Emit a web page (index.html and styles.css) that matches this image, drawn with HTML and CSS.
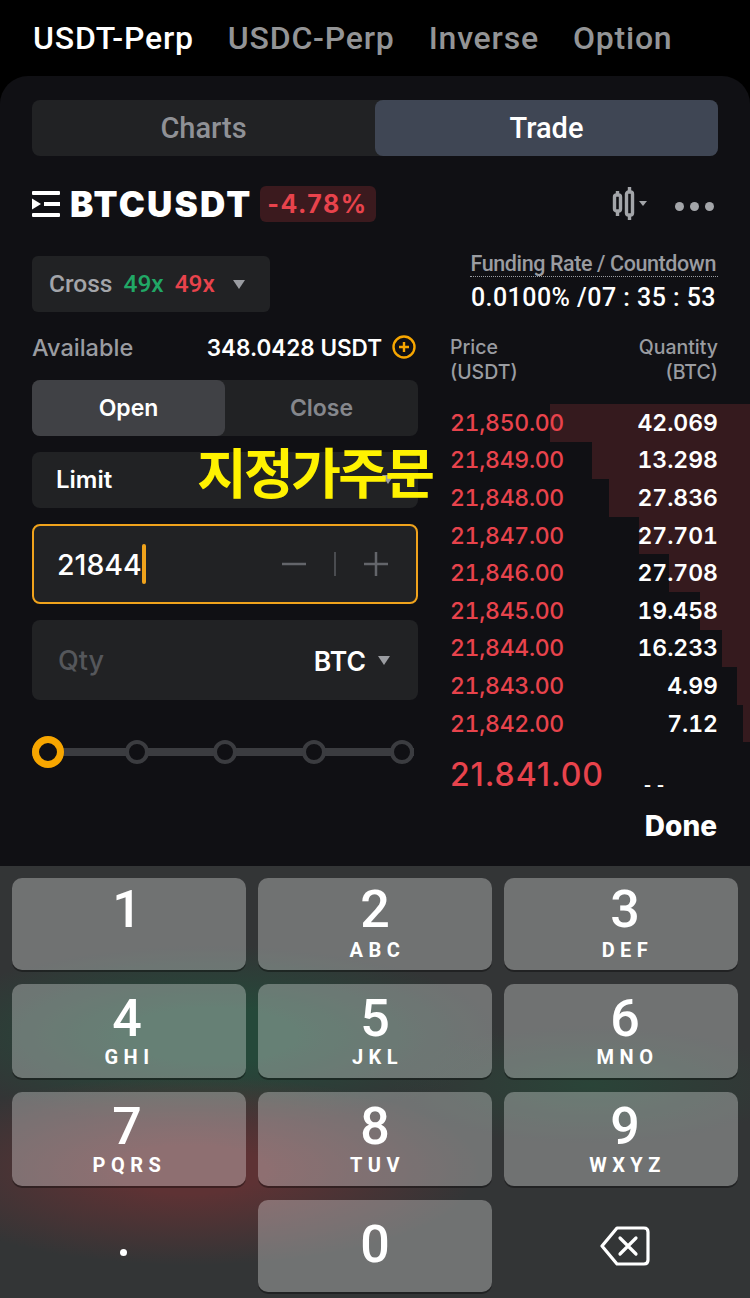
FILE: index.html
```html
<!DOCTYPE html>
<html lang="en">
<head>
    <meta charset="UTF-8">
    <meta name="viewport" content="width=device-width, initial-scale=1.0">
    <title>BTCUSDT Trade</title>
    <link rel="stylesheet" href="styles.css">
</head>
<body>

<nav class="market-tabs">
    <span class="market-tab active">USDT-Perp</span>
    <span class="market-tab">USDC-Perp</span>
    <span class="market-tab">Inverse</span>
    <span class="market-tab">Option</span>
</nav>

<main class="panel">
    <div class="view-switch">
        <span class="view-btn">Charts</span>
        <span class="view-btn active">Trade</span>
    </div>

    <div class="symbol-row">
        <svg class="menu-icon" width="28" height="28" viewBox="0 0 28 28">
            <rect x="0" y="1" width="28" height="4" rx="1" fill="#fff"/>
            <rect x="12" y="12" width="16" height="4" fill="#fff"/>
            <rect x="0" y="23" width="28" height="4" rx="1" fill="#fff"/>
            <path d="M0 8.5L9 14L0 19.5Z" fill="#fff"/>
        </svg>
        <span class="symbol">BTCUSDT</span>
        <span class="change">-4.78%</span>
        <div class="symbol-tools">
            <svg width="36" height="34" viewBox="0 0 36 34" fill="none" stroke="#a3a5a9" stroke-width="3.4">
                <rect x="2.5" y="8" width="6" height="16" rx="2"/>
                <rect x="14.5" y="5" width="6" height="23" rx="2"/>
                <path d="M5.5 4V8M5.5 24V29M17.5 0V5M17.5 28V33"/>
                <path d="M27 14H35L31 19Z" fill="#a3a5a9" stroke="none"/>
            </svg>
            <span class="more"><i></i><i></i><i></i></span>
        </div>
    </div>

    <div class="info-row">
        <div class="margin-btn">
            <span>Cross</span>
            <span class="green">49x</span>
            <span class="red">49x</span>
            <b class="caret"></b>
        </div>
        <div class="funding">
            <div class="funding-label">Funding Rate / Countdown</div>
            <div class="funding-value">0.0100% /07 : 35 : 53</div>
        </div>
    </div>

    <div class="trade-grid">
        <section class="order-form">
            <div class="available">
                <span class="muted">Available</span>
                <span class="balance">348.0428 USDT
                    <svg width="24" height="24" viewBox="0 0 24 24" fill="none" stroke="#f7a600" stroke-width="2.4">
                        <circle cx="12" cy="12" r="10.5"/>
                        <path d="M7 12H17M12 7V17"/>
                    </svg>
                </span>
            </div>

            <div class="open-close">
                <span class="oc-btn active">Open</span>
                <span class="oc-btn">Close</span>
            </div>

            <div class="field field-type">
                <span>Limit</span>
                <b class="caret"></b>
            </div>

            <div class="field field-price">
                <span class="price-text">21844<i class="cursor"></i></span>
                <span class="stepper">
                    <svg width="26" height="26" viewBox="0 0 26 26" stroke="#63656a" stroke-width="2.5"><path d="M1 13H25"/></svg>
                    <i class="step-line"></i>
                    <svg width="26" height="26" viewBox="0 0 26 26" stroke="#63656a" stroke-width="2.5"><path d="M1 13H25M13 1V25"/></svg>
                </span>
            </div>

            <div class="field field-qty">
                <span class="placeholder">Qty</span>
                <span class="unit">BTC <b class="caret"></b></span>
            </div>

            <div class="slider">
                <i class="dot first"></i>
                <i class="dot"></i>
                <i class="dot"></i>
                <i class="dot"></i>
                <i class="dot"></i>
            </div>
        </section>

        <section class="book">
            <div class="book-head">
                <span>Price<br>(USDT)</span>
                <span class="right">Quantity<br>(BTC)</span>
            </div>
            <div class="book-row"><i class="depth" style="width: 200px"></i><span class="red">21,850.00</span><span class="qty">42.069</span></div>
            <div class="book-row"><i class="depth" style="width: 158px"></i><span class="red">21,849.00</span><span class="qty">13.298</span></div>
            <div class="book-row"><i class="depth" style="width: 141px"></i><span class="red">21,848.00</span><span class="qty">27.836</span></div>
            <div class="book-row"><i class="depth" style="width: 111px"></i><span class="red">21,847.00</span><span class="qty">27.701</span></div>
            <div class="book-row"><i class="depth" style="width: 81px"></i><span class="red">21,846.00</span><span class="qty">27.708</span></div>
            <div class="book-row"><i class="depth" style="width: 50px"></i><span class="red">21,845.00</span><span class="qty">19.458</span></div>
            <div class="book-row"><i class="depth" style="width: 28px"></i><span class="red">21,844.00</span><span class="qty">16.233</span></div>
            <div class="book-row"><i class="depth" style="width: 13px"></i><span class="red">21,843.00</span><span class="qty">4.99</span></div>
            <div class="book-row"><i class="depth" style="width: 7px"></i><span class="red">21,842.00</span><span class="qty">7.12</span></div>
            <div class="last-price">
                <span class="red">21.841.00</span>
                <span class="dashes">- -</span>
            </div>
        </section>
    </div>

    <div class="done-bar">Done</div>

    <div class="overlay-label">지정가주문</div>
</main>

<div class="keyboard">
    <div class="key"><span class="num">1</span></div>
    <div class="key"><span class="num">2</span><span class="letters">ABC</span></div>
    <div class="key"><span class="num">3</span><span class="letters">DEF</span></div>
    <div class="key"><span class="num">4</span><span class="letters">GHI</span></div>
    <div class="key"><span class="num">5</span><span class="letters">JKL</span></div>
    <div class="key"><span class="num">6</span><span class="letters">MNO</span></div>
    <div class="key"><span class="num">7</span><span class="letters">PQRS</span></div>
    <div class="key"><span class="num">8</span><span class="letters">TUV</span></div>
    <div class="key"><span class="num">9</span><span class="letters">WXYZ</span></div>
    <div class="key blank"><span class="point"></span></div>
    <div class="key zero"><span class="num">0</span></div>
    <div class="key blank">
        <svg width="50" height="40" viewBox="0 0 50 40" fill="none" stroke="#fff" stroke-width="3.2" stroke-linejoin="round" stroke-linecap="round">
            <path d="M17 2H44Q48 2 48 6V34Q48 38 44 38H17L2 20Z"/>
            <path d="M20 12L36 28M36 12L20 28"/>
        </svg>
    </div>
</div>

</body>
</html>
```

FILE: styles.css
```css
* {
    box-sizing: border-box;
}
body {
    margin: 0;
    width: 750px;
    height: 1298px;
    overflow: hidden;
    background-color: #000;
    color: #fff;
    font-family: Inter, "Noto Sans CJK KR", sans-serif;
}
i, b {
    font-style: normal;
    display: block;
}
.red {
    color: #e8434c;
}
.green {
    color: #21a866;
}
.muted {
    color: #9a9ca1;
}

/* top tabs */
.market-tabs {
    height: 76px;
    padding: 0 0 0 33px;
    display: flex;
    align-items: center;
    gap: 34px;
    font-family: Roboto, sans-serif;
    font-size: 32px;
    font-weight: 500;
    letter-spacing: 0.8px;
}
.market-tab {
    color: #939496;
}
.market-tab.active {
    color: #fff;
}

/* main panel */
.panel {
    position: relative;
    height: 790px;
    padding-top: 24px;
    background-color: #101014;
    border-radius: 28px 28px 0 0;
}
.view-switch {
    margin: 0 32px;
    height: 56px;
    display: flex;
    border-radius: 8px;
    background-color: #212224;
    font-family: Roboto, sans-serif;
    font-size: 29px;
    font-weight: 500;
}
.view-btn {
    flex: 1;
    display: flex;
    align-items: center;
    justify-content: center;
    color: #8f9196;
    border-radius: 8px;
}
.view-btn.active {
    background-color: #3f4654;
    color: #fff;
}

.symbol-row {
    margin: 30px 32px 0;
    height: 36px;
    display: flex;
    align-items: center;
}
.symbol {
    margin-left: 10px;
    font-size: 35px;
    font-weight: 900;
    letter-spacing: 2.2px;
}
.change {
    margin-left: 7px;
    width: 116px;
    height: 36px;
    display: flex;
    align-items: center;
    justify-content: center;
    background-color: #3b1a1e;
    border-radius: 6px;
    color: #e8434c;
    font-size: 25px;
    font-weight: 700;
    letter-spacing: 1.5px;
}
.symbol-tools {
    margin-left: auto;
    display: flex;
    align-items: center;
    gap: 27px;
}
.more {
    display: flex;
    gap: 6px;
    margin-right: 4px;
    padding-top: 4px;
}
.more i {
    width: 9px;
    height: 9px;
    border-radius: 50%;
    background-color: #a3a5a9;
}

.info-row {
    margin: 34px 32px 0;
    height: 56px;
    display: flex;
    justify-content: space-between;
}
.margin-btn {
    width: 238px;
    display: flex;
    align-items: center;
    gap: 11px;
    padding: 0 0 2px 17px;
    background-color: #212224;
    border-radius: 6px;
    font-family: Roboto, sans-serif;
    font-size: 24.5px;
    font-weight: 500;
    color: #a3a5a9;
}
.margin-btn .caret {
    margin: 3px 0 0 7px;
}
.caret {
    width: 0;
    height: 0;
    border-left: 6.5px solid transparent;
    border-right: 6.5px solid transparent;
    border-top: 9px solid #9a9ca1;
}
.funding {
    width: 248px;
    text-align: right;
    font-family: Roboto, sans-serif;
}
.funding-label {
    height: 24px;
    margin-top: -3px;
    padding-right: 2px;
    color: #9a9ca1;
    font-size: 21.5px;
    font-weight: 500;
    line-height: 22px;
    letter-spacing: -0.4px;
    white-space: nowrap;
    border-bottom: 1px dotted #9a9ca1;
}
.funding-value {
    margin-top: 6px;
    padding-right: 2px;
    font-size: 25px;
    font-weight: 500;
    line-height: 30px;
    letter-spacing: 0.45px;
    white-space: nowrap;
}

.trade-grid {
    margin-top: 16px;
    padding-left: 32px;
    display: grid;
    grid-template-columns: 386px 1fr;
    column-gap: 32px;
}

/* order form */
.available {
    height: 40px;
    padding-bottom: 2px;
    display: flex;
    align-items: center;
    justify-content: space-between;
    font-size: 23.5px;
    font-weight: 500;
}
.balance {
    display: flex;
    align-items: center;
    gap: 10px;
    margin-right: 2px;
    font-size: 22.5px;
    font-weight: 600;
}
.open-close {
    margin-top: 12px;
    height: 56px;
    display: flex;
    background-color: #212224;
    border-radius: 8px;
    font-size: 23px;
    font-weight: 600;
}
.oc-btn {
    flex: 1;
    display: flex;
    align-items: center;
    justify-content: center;
    color: #85878c;
    border-radius: 8px;
}
.oc-btn.active {
    background-color: #404145;
    color: #fff;
}
.field {
    margin-top: 16px;
    display: flex;
    align-items: center;
    justify-content: space-between;
    background-color: #212224;
    border-radius: 8px;
}
.field-type {
    height: 56px;
    padding: 0 24px 2px;
    font-size: 24px;
    font-weight: 600;
}
.field-price {
    height: 80px;
    padding: 0 27px 0 23px;
    border: 2px solid #f0a31c;
    font-size: 28.5px;
    font-weight: 500;
}
.price-text {
    display: flex;
    align-items: center;
}
.cursor {
    width: 4px;
    height: 40px;
    background-color: #f0a31c;
    border-radius: 2px;
}
.stepper {
    display: flex;
    align-items: center;
    gap: 27px;
}
.step-line {
    width: 2px;
    height: 24px;
    background-color: #4a4c50;
}
.field-qty {
    height: 80px;
    padding: 1px 28px 0 26px;
    font-size: 27px;
    font-weight: 600;
}
.placeholder {
    color: #55575b;
    font-weight: 500;
}
.unit {
    display: flex;
    align-items: center;
    gap: 12px;
    font-size: 26.5px;
}
.slider {
    margin-top: 36px;
    width: 382px;
    height: 32px;
    display: flex;
    align-items: center;
    justify-content: space-between;
    background: linear-gradient(#3b3c40, #3b3c40) center / 100% 8px no-repeat;
}
.dot {
    width: 24px;
    height: 24px;
    border: 4px solid #3b3c40;
    border-radius: 50%;
    background-color: #101014;
}
.dot.first {
    width: 32px;
    height: 32px;
    margin-right: -4px;
    border: 7px solid #f7a600;
}

/* order book */
.book-head {
    padding: 7px 32px 0 0;
    display: flex;
    justify-content: space-between;
    height: 76px;
    font-size: 19.5px;
    font-weight: 500;
    line-height: 25px;
    color: #9a9ca1;
}
.right {
    text-align: right;
}
.book-row {
    position: relative;
    height: 37.6px;
    padding-right: 32px;
    display: flex;
    align-items: center;
    justify-content: space-between;
    font-size: 23px;
    font-weight: 500;
    letter-spacing: -0.3px;
    font-variant-numeric: tabular-nums;
}
.book-row span {
    position: relative;
}
.qty {
    font-weight: 600;
    letter-spacing: 0;
}
.depth {
    position: absolute;
    top: 0;
    right: 0;
    bottom: 0;
    background-color: #351a1e;
}
.last-price {
    height: 46px;
    margin-top: 9px;
    display: flex;
    align-items: center;
    overflow: hidden;
    font-size: 32px;
    font-weight: 500;
    letter-spacing: 0.9px;
}
.dashes {
    margin-left: 40px;
    padding-top: 22px;
    font-size: 16px;
    font-weight: 700;
}
.done-bar {
    margin-top: 11px;
    padding-right: 33px;
    text-align: right;
    font-size: 28px;
    font-weight: 800;
    line-height: 36px;
}
.overlay-label {
    position: absolute;
    left: 197px;
    top: 360px;
    font-family: "Noto Sans CJK KR", sans-serif;
    font-size: 54px;
    font-weight: 700;
    letter-spacing: -2.6px;
    line-height: 70px;
    white-space: nowrap;
    color: #fff200;
}

/* number pad */
.keyboard {
    height: 432px;
    padding: 12px 12px 6px;
    display: grid;
    grid-template-columns: repeat(3, 234px);
    grid-template-rows: 92px 94px 94px 92px;
    column-gap: 12px;
    row-gap: 14px;
    background-color: #333536;
    background-image:
        radial-gradient(ellipse 290px 95px at 190px 1170px, #5e3234 25%, rgba(94, 50, 52, 0) 100%),
        radial-gradient(ellipse 290px 90px at 210px 1035px, #25493a 30%, rgba(37, 73, 58, 0) 100%),
        radial-gradient(ellipse 200px 60px at 590px 1085px, #2a4438, rgba(42, 68, 56, 0) 100%);
    background-attachment: fixed;
}
.key {
    display: flex;
    flex-direction: column;
    align-items: center;
    padding-top: 7px;
    border-radius: 10px;
    background-color: rgba(255, 255, 255, 0.3);
    box-shadow: 0 2px 0 rgba(0, 0, 0, 0.35);
    font-family: Roboto, sans-serif;
}
.key:nth-child(3n) {
    padding-left: 8px;
}
.key:nth-child(3n+1) {
    padding-right: 4px;
}
.key:nth-child(n+4) {
    padding-top: 10px;
}
.num {
    font-size: 52px;
    font-weight: 500;
    line-height: 50px;
}
.letters {
    margin-top: 2px;
    font-size: 20px;
    font-weight: 700;
    letter-spacing: 5.5px;
    line-height: 22px;
    padding-left: 5px;
}
.key:nth-child(-n+3) .letters {
    margin-top: 4px;
}
.key.blank {
    background: none;
    box-shadow: none;
    justify-content: center;
    padding-top: 0;
}
.key.zero {
    padding-top: 20px;
}
.point {
    width: 7px;
    height: 7px;
    margin-top: 13px;
    margin-right: 8px;
    border-radius: 50%;
    background-color: #fff;
}
```
